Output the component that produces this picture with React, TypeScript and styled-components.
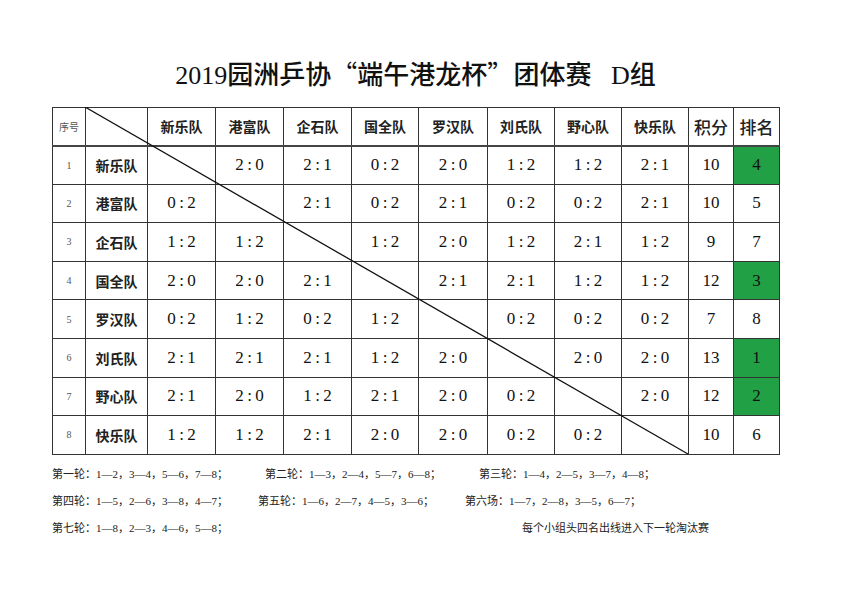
import React from "react";
import styled, { createGlobalStyle } from "styled-components";

const GlobalStyle = createGlobalStyle`
  html, body {
    margin: 0;
    padding: 0;
    background: #fff;
  }
  body {
    font-family: "Liberation Serif", "Noto Sans CJK SC", serif;
    color: #111;
  }
`;

const Page = styled.div`
  width: 842px;
  height: 595px;
  padding: 56px 0 0 52px;
  box-sizing: border-box;
`;

const Title = styled.h1`
  width: 727px;
  margin: 0 0 17px;
  height: 34px;
  line-height: 34px;
  text-align: center;
  font-size: 26px;
  font-weight: 500;
  font-family: "Liberation Serif", "Noto Sans CJK SC", serif;
  white-space: pre;
  color: #111;
`;

const Quote = styled.span`
  font-family: "Noto Sans CJK SC", sans-serif;
  font-weight: 400;
`;

const TableWrap = styled.div`
  position: relative;
  width: 727px;
`;

const Table = styled.table`
  width: 727px;
  table-layout: fixed;
  border-collapse: collapse;
  border: 1.5px solid #333;

  td {
    border: 1px solid #333;
    padding: 0;
    text-align: center;
    vertical-align: middle;
  }
`;

const HeadRow = styled.tr`
  height: 38px;

  td {
    border-bottom: 2px solid #444;
  }
`;

const BodyRow = styled.tr`
  height: 38.6px;
`;

const IndexCell = styled.td`
  font-size: 10px;
  color: #555;
  font-family: "Liberation Serif", "Noto Sans CJK SC", serif;
`;

const TeamCell = styled.td<{ $size?: number }>`
  font-size: ${(p) => p.$size ?? 14}px;
  font-weight: ${(p) => (p.$size ? 500 : 700)};
  font-family: "Noto Sans CJK SC", sans-serif;
  color: #222;
`;

const Score = styled.td`
  font-size: 17px;
  letter-spacing: 3.5px;
  padding-left: 3.5px !important;
  font-family: "Liberation Serif", serif;
  color: #111;
`;

const NumCell = styled.td<{ $green?: boolean }>`
  font-size: 17px;
  font-family: "Liberation Serif", serif;
  color: #111;
  background: ${(p) => (p.$green ? "#22a045" : "transparent")};
`;

const Diagonal = styled.svg`
  position: absolute;
  left: 0;
  top: 0;
  pointer-events: none;
`;

const Footer = styled.div`
  margin-top: 6px;
  font-size: 11px;
  line-height: 27px;
  color: #222;
  font-family: "Liberation Serif", "Noto Sans CJK SC", serif;
`;

const Line = styled.div`
  display: flex;
  white-space: pre;
`;

const Round = styled.span<{ $w?: number }>`
  width: ${(p) => (p.$w ? `${p.$w}px` : "auto")};
  flex: none;
`;

const teams = ["新乐队", "港富队", "企石队", "国全队", "罗汉队", "刘氏队", "野心队", "快乐队"];

type Row = { scores: (string | null)[]; points: number; rank: number };

const rows: Row[] = [
  { scores: [null, "2:0", "2:1", "0:2", "2:0", "1:2", "1:2", "2:1"], points: 10, rank: 4 },
  { scores: ["0:2", null, "2:1", "0:2", "2:1", "0:2", "0:2", "2:1"], points: 10, rank: 5 },
  { scores: ["1:2", "1:2", null, "1:2", "2:0", "1:2", "2:1", "1:2"], points: 9, rank: 7 },
  { scores: ["2:0", "2:0", "2:1", null, "2:1", "2:1", "1:2", "1:2"], points: 12, rank: 3 },
  { scores: ["0:2", "1:2", "0:2", "1:2", null, "0:2", "0:2", "0:2"], points: 7, rank: 8 },
  { scores: ["2:1", "2:1", "2:1", "1:2", "2:0", null, "2:0", "2:0"], points: 13, rank: 1 },
  { scores: ["2:1", "2:0", "1:2", "2:1", "2:0", "0:2", null, "2:0"], points: 12, rank: 2 },
  { scores: ["1:2", "1:2", "2:1", "2:0", "2:0", "0:2", "0:2", null], points: 10, rank: 6 },
];

const widths = [33, 62, 68, 68, 68, 67, 69, 67, 67, 67, 45, 46];

const App = () => (
  <Page>
    <GlobalStyle />
    <Title>
      2019园洲乒协<Quote>“</Quote>端午港龙杯<Quote>”</Quote>团体赛{"   "}D组
    </Title>
    <TableWrap>
      <Table>
        <colgroup>
          {widths.map((w, i) => (
            <col key={i} style={{ width: w }} />
          ))}
        </colgroup>
        <tbody>
          <HeadRow>
            <IndexCell>序号</IndexCell>
            <td />
            {teams.map((t) => (
              <TeamCell key={t}>{t}</TeamCell>
            ))}
            <TeamCell $size={17}>积分</TeamCell>
            <TeamCell $size={17}>排名</TeamCell>
          </HeadRow>
          {rows.map((r, i) => (
            <BodyRow key={i}>
              <IndexCell>{i + 1}</IndexCell>
              <TeamCell>{teams[i]}</TeamCell>
              {r.scores.map((s, j) => (
                <Score key={j}>{s}</Score>
              ))}
              <NumCell>{r.points}</NumCell>
              <NumCell $green={r.rank <= 4}>{r.rank}</NumCell>
            </BodyRow>
          ))}
        </tbody>
      </Table>
      <Diagonal width="727" height="348">
        <line x1="33" y1="0" x2="636" y2="347" stroke="#111" strokeWidth="1.3" />
      </Diagonal>
    </TableWrap>
    <Footer>
      <Line>
        <Round $w={213}>第一轮：1—2，3—4，5—6，7—8；</Round>
        <Round $w={214}>第二轮：1—3，2—4，5—7，6—8；</Round>
        <Round>第三轮：1—4，2—5，3—7，4—8；</Round>
      </Line>
      <Line>
        <Round $w={206}>第四轮：1—5，2—6，3—8，4—7；</Round>
        <Round $w={207}>第五轮：1—6，2—7，4—5，3—6；</Round>
        <Round>第六场：1—7，2—8，3—5，6—7；</Round>
      </Line>
      <Line>
        <Round $w={470}>第七轮：1—8，2—3，4—6，5—8；</Round>
        <Round>每个小组头四名出线进入下一轮淘汰赛</Round>
      </Line>
    </Footer>
  </Page>
);

export default App;
